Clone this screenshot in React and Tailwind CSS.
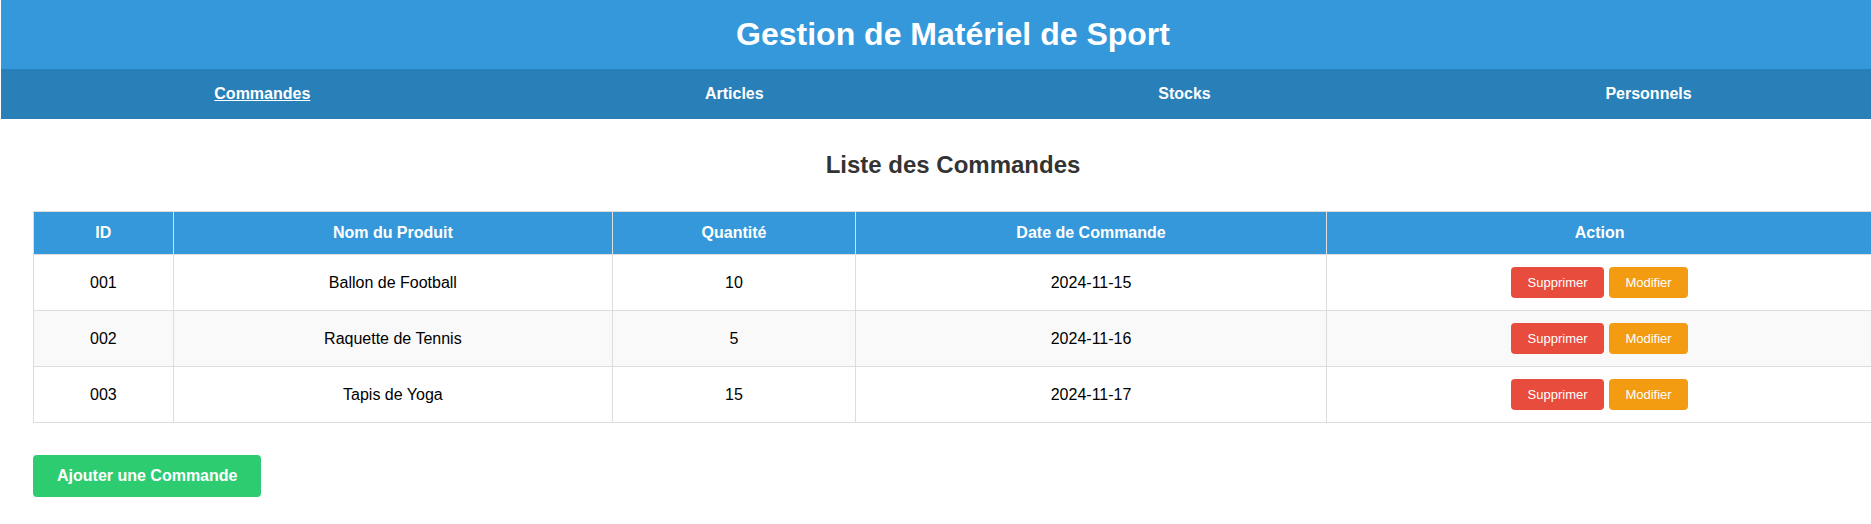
const links = ["Commandes", "Articles", "Stocks", "Personnels"];

const columns = ["ID", "Nom du Produit", "Quantité", "Date de Commande", "Action"];

const orders = [
  { id: "001", product: "Ballon de Football", quantity: 10, date: "2024-11-15" },
  { id: "002", product: "Raquette de Tennis", quantity: 5, date: "2024-11-16" },
  { id: "003", product: "Tapis de Yoga", quantity: 15, date: "2024-11-17" },
];

function NavBar() {
  return (
    <nav className="bg-[#2980b9] p-4">
      <ul className="flex justify-around">
        {links.map((label, i) => (
          <li key={label} className="flex">
            <a
              href={"#" + label.toLowerCase()}
              aria-current={i === 0 ? "page" : undefined}
              className={i === 0 ? "font-bold text-white underline" : "font-bold text-white"}
            >
              {label}
            </a>
          </li>
        ))}
      </ul>
    </nav>
  );
}

function OrdersTable() {
  return (
    <table className="w-full border-collapse text-center">
      <thead>
        <tr className="bg-[#3498db] text-white">
          {columns.map((c) => (
            <th key={c} scope="col" className="border border-[#dddddd] p-3 font-bold">
              {c}
            </th>
          ))}
        </tr>
      </thead>
      <tbody>
        {orders.map((o) => (
          <tr key={o.id} className="even:bg-[#f9f9f9]">
            <td className="border border-[#dddddd] p-3">{o.id}</td>
            <td className="border border-[#dddddd] p-3">{o.product}</td>
            <td className="border border-[#dddddd] p-3">{o.quantity}</td>
            <td className="border border-[#dddddd] p-3">{o.date}</td>
            <td className="border border-[#dddddd] p-3">
              <div className="flex justify-center gap-[5px] text-[13px] leading-[15px] text-white">
                <button type="button" className="min-w-[93px] rounded bg-[#e74c3c] py-2">
                  Supprimer
                </button>
                <button type="button" className="min-w-[79px] rounded bg-[#f39c12] py-2">
                  Modifier
                </button>
              </div>
            </td>
          </tr>
        ))}
      </tbody>
    </table>
  );
}

export default function App() {
  return (
    <div className="overflow-hidden bg-white pl-px font-['Liberation_Sans',Arial,sans-serif] text-base leading-[18px] text-black">
      <div className="-mr-[34px]">
        <header className="bg-[#3498db] p-4 text-center text-white">
          <h1 className="text-[32px] leading-[37px] font-bold">Gestion de Matériel de Sport</h1>
        </header>
        <NavBar />
        <main className="flex flex-col items-start gap-8 p-8">
          <h2 className="w-full text-center text-2xl leading-[28px] font-bold text-[#333333]">
            Liste des Commandes
          </h2>
          <OrdersTable />
          <button type="button" className="rounded bg-[#2ecc71] px-6 py-3 font-bold text-white">
            Ajouter une Commande
          </button>
        </main>
      </div>
    </div>
  );
}
